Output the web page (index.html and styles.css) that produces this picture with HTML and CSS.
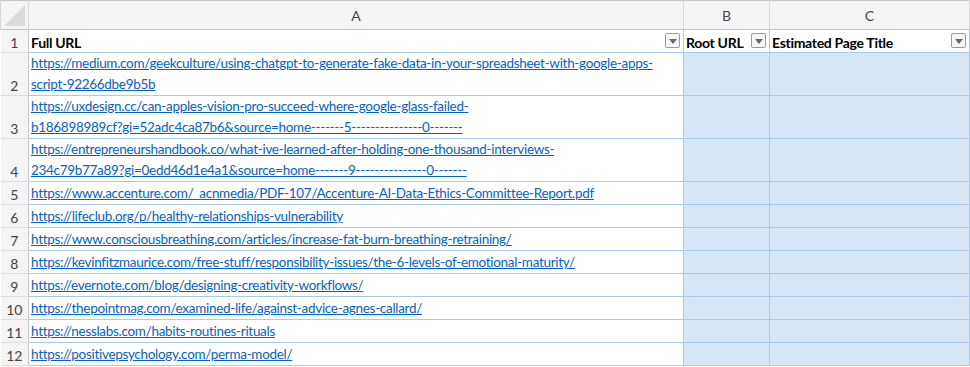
FILE: index.html
```html
<!DOCTYPE html>
<html lang="en">
<head>
    <meta charset="UTF-8">
    <title>Links</title>
    <link rel="stylesheet" href="styles.css">
</head>
<body>
    <table class="sheet">
        <colgroup>
            <col class="col-head">
            <col class="col-a">
            <col class="col-b">
            <col class="col-c">
        </colgroup>
        <thead>
            <tr class="letters">
                <th class="corner"><span class="corner-tri"></span></th>
                <th>A</th>
                <th>B</th>
                <th>C</th>
            </tr>
        </thead>
        <tbody>
            <tr class="row-title">
                <td class="num">1</td>
                <td class="title"><div class="title-cell"><span class="title-text">Full URL</span><span class="filter"></span></div></td>
                <td class="title"><div class="title-cell"><span class="title-text">Root URL</span><span class="filter"></span></div></td>
                <td class="title"><div class="title-cell"><span class="title-text">Estimated Page Title</span><span class="filter"></span></div></td>
            </tr>
            <tr class="row-tall">
                <td class="num">2</td>
                <td class="url"><a href="#">https://medium.com/geekculture/using-chatgpt-to-generate-fake-data-in-your-spreadsheet-with-google-apps-<br>script-92266dbe9b5b</a></td>
                <td class="fill"></td>
                <td class="fill"></td>
            </tr>
            <tr class="row-tall">
                <td class="num">3</td>
                <td class="url"><a href="#">https://uxdesign.cc/can-apples-vision-pro-succeed-where-google-glass-failed-<br>b186898989cf?gi=52adc4ca87b6&amp;source=home-------5---------------0-------</a></td>
                <td class="fill"></td>
                <td class="fill"></td>
            </tr>
            <tr class="row-tall">
                <td class="num">4</td>
                <td class="url"><a href="#">https://entrepreneurshandbook.co/what-ive-learned-after-holding-one-thousand-interviews-<br>234c79b77a89?gi=0edd46d1e4a1&amp;source=home-------9---------------0-------</a></td>
                <td class="fill"></td>
                <td class="fill"></td>
            </tr>
            <tr>
                <td class="num">5</td>
                <td class="url"><a href="#">https://www.accenture.com/_acnmedia/PDF-107/Accenture-AI-Data-Ethics-Committee-Report.pdf</a></td>
                <td class="fill"></td>
                <td class="fill"></td>
            </tr>
            <tr>
                <td class="num">6</td>
                <td class="url"><a href="#">https://lifeclub.org/p/healthy-relationships-vulnerability</a></td>
                <td class="fill"></td>
                <td class="fill"></td>
            </tr>
            <tr>
                <td class="num">7</td>
                <td class="url"><a href="#">https://www.consciousbreathing.com/articles/increase-fat-burn-breathing-retraining/</a></td>
                <td class="fill"></td>
                <td class="fill"></td>
            </tr>
            <tr>
                <td class="num">8</td>
                <td class="url"><a href="#">https://kevinfitzmaurice.com/free-stuff/responsibility-issues/the-6-levels-of-emotional-maturity/</a></td>
                <td class="fill"></td>
                <td class="fill"></td>
            </tr>
            <tr>
                <td class="num">9</td>
                <td class="url"><a href="#">https://evernote.com/blog/designing-creativity-workflows/</a></td>
                <td class="fill"></td>
                <td class="fill"></td>
            </tr>
            <tr>
                <td class="num">10</td>
                <td class="url"><a href="#">https://thepointmag.com/examined-life/against-advice-agnes-callard/</a></td>
                <td class="fill"></td>
                <td class="fill"></td>
            </tr>
            <tr>
                <td class="num">11</td>
                <td class="url"><a href="#">https://nesslabs.com/habits-routines-rituals</a></td>
                <td class="fill"></td>
                <td class="fill"></td>
            </tr>
            <tr>
                <td class="num">12</td>
                <td class="url"><a href="#">https://positivepsychology.com/perma-model/</a></td>
                <td class="fill"></td>
                <td class="fill"></td>
            </tr>
        </tbody>
    </table>
</body>
</html>
```

FILE: styles.css
```css
* {
    margin: 0;
    padding: 0;
    box-sizing: border-box;
}

body {
    background-color: #fff;
    font-family: 'Lato', 'Liberation Sans', sans-serif;
    font-size: 13.5px;
    letter-spacing: -0.3px;
    color: #000;
    overflow: hidden;
}

.sheet {
    border-collapse: collapse;
    table-layout: fixed;
    width: 969px;
    border-top: 1px solid #c6c6c6;
}

.col-head { width: 28px; }
.col-a { width: 655px; }
.col-b { width: 86px; }
.col-c { width: 200px; }

.sheet td,
.sheet th {
    border: 1px solid #a9cbe9;
    padding: 0;
    white-space: nowrap;
    overflow: hidden;
}

/* column letters */
.letters th {
    height: 29px;
    background-color: #f4f4f4;
    border: 1px solid #d9d9d9;
    border-top: none;
    border-bottom-color: #c6c6c6;
    font-weight: normal;
    color: #444;
    font-size: 14px;
    letter-spacing: 0;
    text-align: center;
}

.corner {
    position: relative;
}

.corner-tri {
    position: absolute;
    right: 3px;
    bottom: 3px;
    width: 0;
    height: 0;
    border-left: 21px solid transparent;
    border-bottom: 21px solid #dcdcdc;
}

/* row numbers */
.sheet .num {
    background-color: #f4f4f4;
    color: #444;
    font-size: 14px;
    letter-spacing: 0;
    text-align: center;
    vertical-align: bottom;
    padding-bottom: 1px;
    border-left: none;
    border-right: 1px solid #c6c6c6;
    border-top-color: #dcdcdc;
    border-bottom-color: #dcdcdc;
}

tr td { height: 23px; }
.row-tall td { height: 43px; }

.sheet .title {
    font-weight: bold;
    font-size: 14px;
    padding: 0 3px 0 2px;
    vertical-align: top;
}

.title-cell {
    display: flex;
    align-items: flex-start;
    justify-content: space-between;
}

.title-text {
    padding-top: 4px;
    line-height: 17px;
}

.filter {
    position: relative;
    width: 15px;
    height: 15px;
    margin-top: 3px;
    border: 1px solid #9b9b9b;
    border-radius: 2px;
    background-color: #f6f6f6;
    flex-shrink: 0;
}

.filter::after {
    content: '';
    position: absolute;
    left: 3px;
    top: 5px;
    border-left: 4px solid transparent;
    border-right: 4px solid transparent;
    border-top: 5px solid #6a6a6a;
}

.sheet .url {
    padding: 0 2px;
    vertical-align: bottom;
    line-height: 21px;
}

.url a {
    color: #0563c1;
    text-decoration: underline;
}

.fill {
    background-color: #d6e6f4;
}
```
